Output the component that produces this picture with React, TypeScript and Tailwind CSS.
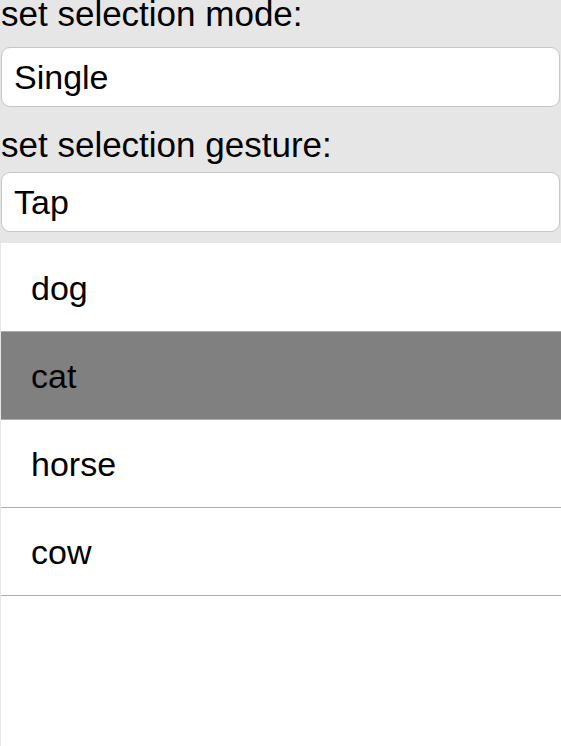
import React, { useState } from 'react';

const ITEMS = ['dog', 'cat', 'horse', 'cow'];

const Field = ({ value }: { value: string }) => (
  <div className="h-[60px] shrink-0 mx-[1px] flex items-center pl-[12px] bg-white border border-[#c6c6c6] rounded-[9px] text-black text-[34px] leading-[38px]">
    {value}
  </div>
);

export default function App() {
  const [selected, setSelected] = useState(1);

  return (
    <div className="w-[561px] h-[746px] overflow-hidden bg-[#e6e6e6] flex flex-col font-['Liberation_Sans',Arial,sans-serif] text-black">
      <div className="h-[47px] shrink-0 pl-[1px] text-[35px] leading-[28px] whitespace-nowrap">set selection mode:</div>
      <Field value="Single" />
      <div className="h-[65px] shrink-0 pl-[1px] pt-[24px] text-[35px] leading-[28px] whitespace-nowrap">set selection gesture:</div>
      <Field value="Tap" />
      <div className="h-[11px] shrink-0" />
      <div className="flex-1 ml-[1px] bg-white pt-[1px]">
        {ITEMS.map((item, i) => (
          <div
            key={item}
            onClick={() => setSelected(i)}
            className={`h-[88px] flex items-center pl-[30px] border-b border-[#acacac] text-[34px] leading-[38px] ${
              selected === i ? 'bg-[#808080]' : 'bg-white'
            }`}
          >
            {item}
          </div>
        ))}
      </div>
    </div>
  );
}
